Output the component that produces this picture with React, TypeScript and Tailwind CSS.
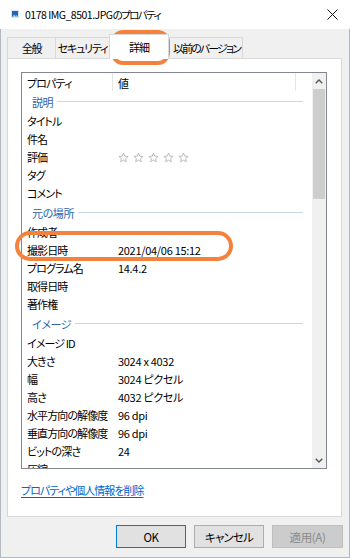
import React from "react";

type Row = { group?: string; label?: string; value?: string; stars?: boolean };

const rows: Row[] = [
  { group: "説明" },
  { label: "タイトル" },
  { label: "件名" },
  { label: "評価", stars: true },
  { label: "タグ" },
  { label: "コメント" },
  { group: "元の場所" },
  { label: "作成者" },
  { label: "撮影日時", value: "2021/04/06 15:12" },
  { label: "プログラム名", value: "14.4.2" },
  { label: "取得日時" },
  { label: "著作権" },
  { group: "イメージ" },
  { label: "イメージ ID" },
  { label: "大きさ", value: "3024 x 4032" },
  { label: "幅", value: "3024 ピクセル" },
  { label: "高さ", value: "4032 ピクセル" },
  { label: "水平方向の解像度", value: "96 dpi" },
  { label: "垂直方向の解像度", value: "96 dpi" },
  { label: "ビットの深さ", value: "24" },
  { label: "圧縮" },
];

function Star() {
  return (
    <svg width="11" height="11" viewBox="0 0 24 24" fill="none">
      <path
        d="M12 2.5l2.9 6.6 7.1.6-5.4 4.7 1.6 7-6.2-3.7-6.2 3.7 1.6-7L2 9.7l7.1-.6z"
        stroke="#b0b0b0"
        strokeWidth="1.8"
        strokeLinejoin="round"
      />
    </svg>
  );
}

function Tab({ label, w, tight, active }: { label: string; w: string; tight?: boolean; active?: boolean }) {
  if (active) {
    return (
      <div
        className={`${w} h-[25px] -ml-px -mr-px mb-[-1px] relative z-10 bg-white border border-b-0 border-[#d9d9d9] flex justify-center pt-[5px] whitespace-nowrap tracking-[-1px]`}
      >
        {label}
      </div>
    );
  }
  return (
    <div
      className={`${w} h-[21px] -ml-px bg-[#f0f0f0] border border-b-0 border-[#d9d9d9] flex justify-center pt-[3px] whitespace-nowrap ${
        tight ? "tracking-[-1.9px] pl-[3px]" : "tracking-[-1.2px]"
      }`}
    >
      {label}
    </div>
  );
}

export default function App() {
  return (
    <div className="relative w-[350px] h-[558px] overflow-hidden bg-[#f0f0f0] text-[11px] leading-[14px] tracking-[-0.4px] text-black font-['Noto_Sans_CJK_JP',sans-serif] [font-feature-settings:'palt']">
      {/* Title bar */}
      <div className="h-[29px] bg-white flex items-center">
        <svg className="ml-[11px] mt-[-1px]" width="8" height="8" viewBox="0 0 8 8">
          <rect x="0" y="0" width="8" height="8" fill="#d8e4f0" />
          <rect x="1" y="1" width="6" height="6" fill="#2566b0" />
          <path d="M1 7l2.2-2.5 1.5 1.5 1-1L7 6.5V7z" fill="#9cc3ea" />
        </svg>
        <span className="ml-[6px] text-[10.5px] tracking-[-0.5px]">
          0178 IMG_8501.JPG<span className="tracking-[-1.6px]">のプロパティ</span>
        </span>
        <svg className="ml-auto mr-[12px]" width="11" height="11" viewBox="0 0 11 11">
          <path d="M0.5 0.5l10 10M10.5 0.5l-10 10" stroke="#111" strokeWidth="1" />
        </svg>
      </div>

      {/* Body */}
      <div className="h-[529px] border-l border-r border-b border-[#b4b9c0] flex flex-col">
        {/* Tabs */}
        <div className="h-[29px] flex items-end pl-[7px]">
          <Tab label="全般" w="w-[49px]" />
          <Tab label="セキュリティ" w="w-[55px]" />
          <Tab label="詳細" w="w-[60px]" active />
          <Tab label="以前のバージョン" w="w-[76px]" tight />
        </div>

        {/* Panel */}
        <div className="ml-[6px] w-[335px] h-[459px] bg-white border border-[#d9d9d9] px-[13px] pt-[13px]">
          <div className="w-[306px] h-[397px] border border-[#828790] flex">
            <div className="flex-1 overflow-hidden">
              <div className="h-[18px] flex">
                <div className="w-[91px] pl-[5px] pt-[3px] border-r border-[#e5e5e5] tracking-[-0.9px]">プロパティ</div>
                <div className="w-[183px] pl-[5px] pt-[3px] border-r border-[#e5e5e5]">値</div>
              </div>
              {rows.map((r, i) =>
                r.group ? (
                  <div key={i} className="h-[21px] flex items-center pl-[10px] pr-[9px]">
                    <span className="text-[#2f5fa8]">{r.group}</span>
                    <div className="flex-1 ml-[4px] h-px bg-[#c8d5ea]" />
                  </div>
                ) : (
                  <div key={i} className="h-[18px] flex items-center whitespace-nowrap">
                    <div className="w-[91px] pl-[5px] shrink-0 tracking-[-0.9px]">{r.label}</div>
                    <div className="pl-[5px] flex items-center gap-[4px] tracking-[-0.3px]">
                      {r.stars ? (
                        <>
                          <Star />
                          <Star />
                          <Star />
                          <Star />
                          <Star />
                        </>
                      ) : (
                        r.value
                      )}
                    </div>
                  </div>
                )
              )}
            </div>
            {/* Scrollbar */}
            <div className="w-[14px] bg-[#f0f0f0] flex flex-col">
              <div className="h-[16px] flex items-center justify-center">
                <svg width="8" height="5" viewBox="0 0 8 5">
                  <path d="M0.7 4.3L4 1l3.3 3.3" stroke="#555" strokeWidth="1.3" fill="none" />
                </svg>
              </div>
              <div className="h-[110px] mx-[1px] bg-[#cdcdcd]" />
              <div className="flex-1" />
              <div className="h-[16px] flex items-center justify-center">
                <svg width="8" height="5" viewBox="0 0 8 5">
                  <path d="M0.7 0.7L4 4l3.3-3.3" stroke="#555" strokeWidth="1.3" fill="none" />
                </svg>
              </div>
            </div>
          </div>
          <div className="mt-[14px] text-[#0066cc] underline underline-offset-2 tracking-[-1px]">
            プロパティや個人情報を削除
          </div>
        </div>

        {/* Buttons */}
        <div className="mt-[8px] flex justify-end gap-[8px] pr-[6px]">
          <button className="w-[70px] h-[23px] bg-[#e1e1e1] border border-[#0078d7] text-[11.5px]">OK</button>
          <button className="w-[70px] h-[23px] bg-[#e1e1e1] border border-[#adadad] text-[11.5px] tracking-[-0.8px]">
            キャンセル
          </button>
          <button className="w-[71px] h-[23px] bg-[#cccccc] border border-[#bfbfbf] text-[#8a8a8a] text-[11.5px]">
            適用(A)
          </button>
        </div>
      </div>

      {/* Annotations */}
      <div className="absolute left-[111px] top-[30px] w-[59px] h-[35px] rounded-[12px] border-[4px] border-[#f2823d]" />
      <div className="absolute left-[15px] top-[231px] w-[218px] h-[30px] rounded-full border-[4px] border-[#f2823d]" />
    </div>
  );
}
